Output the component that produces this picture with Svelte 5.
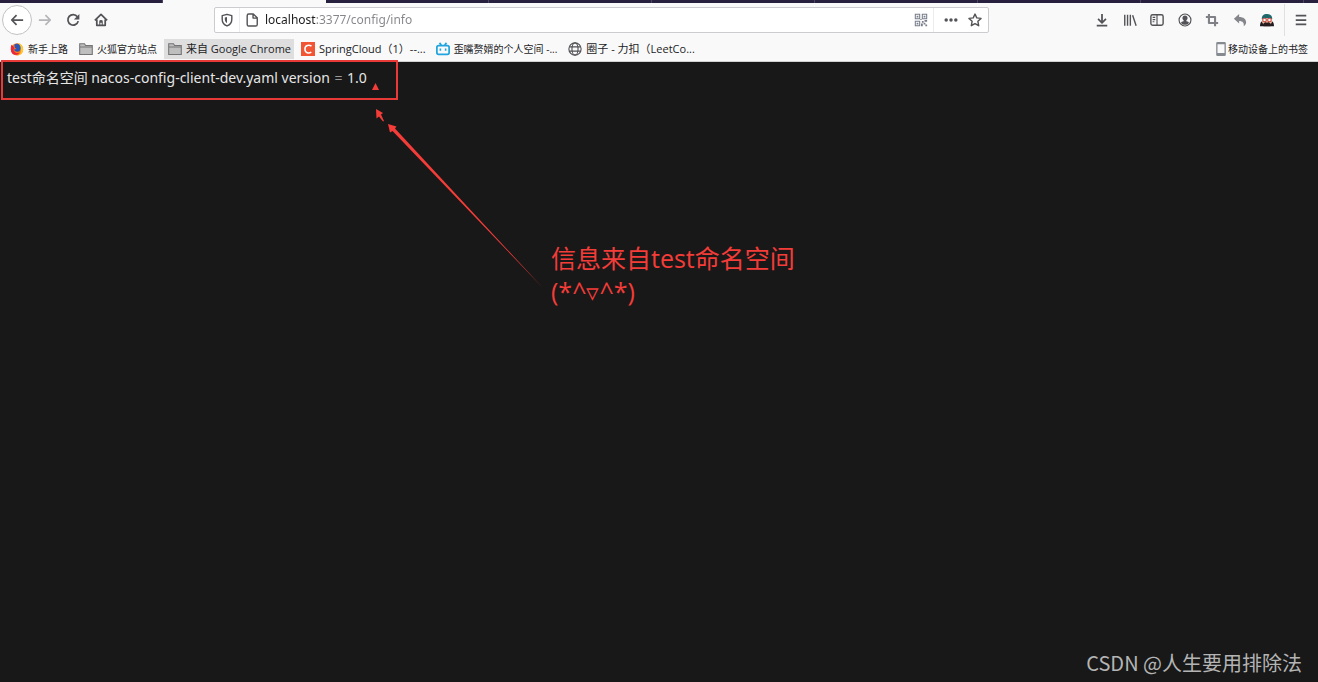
<script>
	let url = $state('localhost:3377/config/info');

	const tabs = [1, 2, 3, 4, 5, 6, 7, 8];
	const activeTab = 2;

	const bookmarks = [
		{ icon: 'firefox', label: '新手上路', cjk: true },
		{ icon: 'folder', label: '火狐官方站点', cjk: true },
		{ icon: 'folder', label: '来自 Google Chrome', active: true },
		{ icon: 'csdn', label: 'SpringCloud（1）--...' },
		{ icon: 'bilibili', label: '歪嘴赘婿的个人空间 -...', cjk: true },
		{ icon: 'globe', label: '圈子 - 力扣（LeetCo...' }
	];

	const tools = [
		{ icon: 'download', label: '下载' },
		{ icon: 'library', label: '书库' },
		{ icon: 'sidebar', label: '侧栏' },
		{ icon: 'account', label: '账户' },
		{ icon: 'crop', label: '截图' },
		{ icon: 'undo', label: '撤销' },
		{ icon: 'avatar', label: '扩展' }
	];
</script>

{#snippet icon(name)}
	<svg class="icon" viewBox="0 0 16 16" aria-hidden="true">
		{#if name === 'back'}
			<path class="line" d="M15 8H2M7.5 2.5 2 8l5.5 5.5" />
		{:else if name === 'forward'}
			<path class="line pale" d="M1 8h13M8.5 2.5 14 8l-5.5 5.5" />
		{:else if name === 'reload'}
			<path class="line" d="M13 4.2A6 6 0 1 0 14 9.3" />
			<path class="solid" d="M15.3 1v6.3H9z" />
		{:else if name === 'home'}
			<path class="line" d="M1 8.3 8 1.5l7 6.8M3.2 7.5V14h9.6V7.5" />
			<path class="solid" d="M6 14V9.5q0-1.5 2-1.5t2 1.5V14H8.8v-3H7.2v3z" />
		{:else if name === 'shield'}
			<path class="line medium" d="M8 1.500 2.500 3v4c0 4 2.500 6.500 5.500 7.800 3-1.300 5.500-3.800 5.500-7.800V3z" />
			<path class="solid" d="M8 4.500v7c-1.500-1-2.500-2.500-2.500-4.500V5z" />
		{:else if name === 'page'}
			<path class="line medium" d="M2.500 3q0-1.800 1.800-1.800H9.500L14 5.500V13q0 1.800-1.800 1.800H4.300Q2.500 14.800 2.500 13zM9.200 1.500v4.300h4.500" />
		{:else if name === 'qr'}
			<path class="qr" d="M1.500 1.500h5v5h-5zM9.500 1.500h5v5h-5zM1.500 9.500h5v5h-5z" />
			<path class="qr-dot" d="M3 3h2v2H3zM11 3h2v2h-2zM3 11h2v2H3zM9 9h2v2H9zM12 8h3v2h-3zM11 11h2v2h-2zM8 12h2v3H8zM13 13h2v2h-2zM7 7h2v1H7z" />
		{:else if name === 'more'}
			<g class="solid"><circle cx="2.500" cy="8" r="2" /><circle cx="8" cy="8" r="2" /><circle cx="13.500" cy="8" r="2" /></g>
		{:else if name === 'star'}
			<path class="line medium" d="m8 1.200 2 4.400 4.900.6-3.600 3.300.9 5L8 12.100l-4.200 2.400.9-5L1.100 6.200 6 5.600z" />
		{:else if name === 'download'}
			<path class="line" d="M8 1v10M3.500 6.800 8 11.200l4.500-4.400M2 14.500h12" />
		{:else if name === 'library'}
			<path class="line medium" d="M2 2v12.500M5.200 2v12.500M8.400 2v12.500M11 2.500l4 12" />
		{:else if name === 'sidebar'}
			<rect class="line medium" x="1" y="2" width="14" height="12" rx="2" />
			<path class="line thin" d="M8 2v12M3 5h3M3 7.500h3M3 10h2" />
		{:else if name === 'account'}
			<circle class="line thin" cx="8" cy="8" r="6.800" />
			<path class="solid" d="M8 3a2.800 2.800 0 0 1 1.600 5.200v1.300c1.600.3 2.900.9 2.900 1.800A5.400 5.400 0 0 1 8 13.500a5.400 5.400 0 0 1-4.500-2.200c0-.9 1.300-1.500 2.900-1.800V8.200A2.800 2.800 0 0 1 8 3z" />
		{:else if name === 'crop'}
			<path class="line grey" d="M4.500 1v10.500H15M1 4.500h10.500V15" />
		{:else if name === 'undo'}
			<path class="grey-fill" d="M1 6.500 7 1v3.500c5 0 8 2.500 8 6 0 2-1.200 3.700-2.800 4.500.8-3.500-1-6-5.200-6V12z" />
		{:else if name === 'avatar'}
			<path fill="#1d1c20" d="M0 15c0-3 1-5 2.500-5.500h11C15 10 16 12 16 15z" />
			<path fill="#f0b89b" d="M2.500 6h11v5l-2 2h-7l-2-2z" />
			<path fill="#1e686d" d="M2 7C2 2.500 4.500 1 8 1s6 1.500 6 6l-2-1H4z" />
			<path fill="#2a1b1e" d="M4 12q2-2 4-1 2-1 4 1v3H4z" />
			<g fill="#fff" stroke="#c94b45" stroke-width="1.200"><circle cx="5.200" cy="8" r="2" /><circle cx="10.800" cy="8" r="2" /></g>
		{:else if name === 'menu'}
			<path class="line" d="M2 3h12M2 8h12M2 13h12" />
		{:else if name === 'firefox'}
			<circle cx="8" cy="8.500" r="7" fill="#ff7a18" />
			<path fill="#ffcb2d" d="M10 1c3 1.500 5.500 4 5 8.500-.5 3.500-3.500 6-7 6 3-1 5-3.500 4-7C11.500 6 10.500 4 10 1z" />
			<path fill="#2956b8" d="M5 3c2-1.500 5-1 6.500 1.200C13 7 12 10.500 9 11c-2.500.3-4-1-4.500-2.500l3-.5-2-1.500z" />
			<path fill="#e8283f" d="M1.500 3 4 5l1 2-1 2c1 3 4 4.500 7 3-2 3-6 3.500-8.500 1C.5 10.500.5 6 1.500 3z" />
		{:else if name === 'folder'}
			<path class="folder" d="M.8 14.200V2h5.500l1.200 2h7.700v10.200zM1 5.800h14" />
		{:else if name === 'csdn'}
			<path fill="#f15533" d="M0 0h16v16H0z" />
			<path fill="none" stroke="#fff" stroke-width="1.800" d="M12 4.800C9.500 3 4.500 3.200 4.500 8s4.500 5.300 7.300 3.500" />
		{:else if name === 'bilibili'}
			<path fill="none" stroke="#20a5de" stroke-width="2" stroke-linejoin="round" d="M3 4h10q2 0 2 2v6q0 2-2 2H3q-2 0-2-2V6q0-2 2-2zM4 1l2 2.500M12 1l-2 2.500" />
			<path stroke="#20a5de" stroke-width="1.800" d="M5 7.500v2.500M11 7.500v2.500" />
		{:else if name === 'globe'}
			<g class="line thin"><circle cx="8" cy="8" r="7" /><ellipse cx="8" cy="8" rx="3.500" ry="7" /><path d="M1.500 5.500h13M1.500 10.500h13" /></g>
		{:else if name === 'phone'}
			<path fill="#858990" fill-rule="evenodd" d="M4 0h8q1.500 0 1.500 1.500v13Q13.500 16 12 16H4q-1.500 0-1.500-1.500v-13Q2.500 0 4 0zm0 2.500v10h8v-10z" />
		{/if}
	</svg>
{/snippet}

<div class="browser">
	<header>
		<div class="tabs">
			{#each tabs as tab}
				<div class="tab" class:active={tab === activeTab}></div>
			{/each}
		</div>

		<nav class="toolbar">
			<button class="round" aria-label="后退">{@render icon('back')}</button>
			<div class="nav-buttons">
				<button aria-label="前进">{@render icon('forward')}</button>
				<button aria-label="重新载入">{@render icon('reload')}</button>
				<button aria-label="主页">{@render icon('home')}</button>
			</div>

			<div class="address">
				<button aria-label="跟踪保护">{@render icon('shield')}</button>
				<button class="divided" aria-label="网站信息">{@render icon('page')}</button>
				<input type="text" aria-label="网址" bind:value={url} />
				<button aria-label="二维码">{@render icon('qr')}</button>
				<div class="page-actions">
					<button aria-label="页面操作">{@render icon('more')}</button>
					<button aria-label="添加书签">{@render icon('star')}</button>
				</div>
			</div>

			<div class="tools">
				{#each tools as tool}
					<button aria-label={tool.label}>{@render icon(tool.icon)}</button>
				{/each}
			</div>
			<div class="menu">
				<button aria-label="菜单">{@render icon('menu')}</button>
			</div>
		</nav>

		<div class="bookmarks">
			{#each bookmarks as item}
				<a href="#bookmark" class:active={item.active} class:cjk={item.cjk}>
					{@render icon(item.icon)}<span>{item.label}</span>
				</a>
			{/each}
			<a href="#mobile" class="mobile cjk">{@render icon('phone')}<span>移动设备上的书签</span></a>
		</div>
	</header>

	<main>
		<p>test命名空间 nacos-config-client-dev.yaml version <span>=</span> 1.0</p>

		<div class="frame"></div>
		<svg class="arrows" viewBox="0 0 200 220" aria-hidden="true">
			<path d="M35.500 21 39 28h-7z" />
			<path d="m36 47 7 4-2 1.500 3 6.500-1 .5-4-5-2.500 2z" />
			<path d="m48 62 8.500 2.500-1.500 2L203 226 52.500 69 50 70.500z" />
		</svg>
		<div class="note">信息来自test命名空间<br />(*^▿^*)</div>
		<div class="watermark">CSDN @人生要用排除法</div>
	</main>
</div>

<style>
	:global(body) {
		margin: 0;
		background: #181818;
	}

	.browser {
		display: flex;
		flex-direction: column;
		min-height: 100vh;
		font-family: "Open Sans", "Noto Sans CJK SC", sans-serif;
		color: #1c1c1e;
	}

	header {
		background: #f9f9fa;
	}

	.tabs {
		display: flex;
		height: 3px;
		overflow: hidden;
		background: #28203f;
	}

	.tab {
		box-sizing: border-box;
		flex: 0 0 163px;
		border-right: 1px solid #4b4560;
	}

	.tab.active {
		background: #f9f9fa;
		border-color: #f9f9fa;
	}

	.toolbar {
		display: flex;
		align-items: center;
		height: 34px;
		padding-left: 2px;
	}

	button {
		display: flex;
		align-items: center;
		justify-content: center;
		width: 24px;
		height: 24px;
		padding: 0;
		border: 0;
		background: none;
	}

	.icon {
		flex: none;
		width: 14px;
		height: 14px;
	}

	.line {
		fill: none;
		stroke: #535357;
		stroke-width: 2;
		stroke-linejoin: round;
	}

	.medium {
		stroke-width: 1.6;
	}

	.thin {
		stroke-width: 1.3;
	}

	.pale {
		stroke: #b5b5b8;
	}

	.grey {
		stroke: #808087;
		stroke-width: 2.4;
	}

	.solid {
		fill: #535357;
	}

	.grey-fill {
		fill: #85858c;
	}

	.qr {
		fill: none;
		stroke: #777c89;
		stroke-width: 1.2;
	}

	.qr-dot {
		fill: #777c89;
	}

	.folder {
		fill: #bebebf;
		stroke: #747477;
		stroke-width: 1.2;
	}

	.round {
		box-sizing: border-box;
		width: 30px;
		height: 30px;
		border: 1px solid #c2c2c4;
		border-radius: 50%;
		background: #fff;
	}

	.nav-buttons {
		display: flex;
		justify-content: space-between;
		width: 80px;
		padding-left: 1px;
	}

	.address {
		box-sizing: border-box;
		display: flex;
		flex: 1;
		align-items: center;
		height: 26px;
		margin: 0 101px;
		padding-right: 1px;
		border: 1px solid #ccccd0;
		border-radius: 2px;
		background: #fff;
	}

	.divided {
		border-left: 1px solid #ededf0;
	}

	input {
		flex: 1;
		min-width: 0;
		height: 22px;
		padding: 0 2px;
		border: 0;
		outline: 0;
		font: 12px/22px "Noto Sans", "Noto Sans CJK SC", sans-serif;
		/* the host is darker than the rest of the address */
		color: transparent;
		caret-color: #1c1c1e;
		background: linear-gradient(to right, #1c1c1e 53px, #85858a 53px);
		background-clip: text;
	}

	.page-actions {
		display: flex;
		padding-left: 5px;
		border-left: 1px solid #ededf0;
	}

	.tools {
		display: flex;
		justify-content: space-between;
		width: 189px;
	}

	.menu {
		margin-left: 5px;
		padding: 4px 5px 4px 4px;
		border-left: 1px solid #e0e0e3;
	}

	.bookmarks {
		display: flex;
		align-items: center;
		height: 24px;
		padding: 0 6px;
		border-bottom: 1px solid #d0d0d2;
	}

	a {
		display: flex;
		align-items: center;
		gap: 4px;
		height: 20px;
		margin-right: 3px;
		padding: 0 3px 0 4px;
		font-size: 11px;
		line-height: 16px;
		color: inherit;
		text-decoration: none;
		white-space: nowrap;
	}

	a span {
		padding-bottom: 1px;
	}

	a.active {
		background: #dededf;
	}

	a.cjk {
		padding-right: 4px;
		font-size: 10px;
	}

	.mobile {
		gap: 0;
		margin: 0 0 0 auto;
	}

	main {
		position: relative;
		flex: 1;
		background: #181818;
	}

	p {
		margin: 0;
		padding: 6px 7px;
		font: 14px/20px "Noto Sans", "Noto Sans CJK SC", sans-serif;
		color: #e6e6e6;
	}

	p span {
		padding: 0 1px;
		color: #999;
	}

	.frame {
		box-sizing: border-box;
		position: absolute;
		top: -2px;
		left: 1px;
		width: 397px;
		height: 40px;
		border: 2px solid #e93a38;
	}

	.arrows {
		position: absolute;
		top: 0;
		left: 340px;
		width: 200px;
		height: 220px;
		overflow: visible;
		fill: #f43c38;
	}

	.note {
		position: absolute;
		top: 180px;
		left: 551px;
		font-size: 25px;
		line-height: 33px;
		color: #f43c38;
	}

	.watermark {
		position: absolute;
		right: 16px;
		bottom: 4px;
		font-family: "Noto Sans CJK SC", sans-serif;
		font-size: 20px;
		line-height: 30px;
		color: #b4b4b4;
	}
</style>
